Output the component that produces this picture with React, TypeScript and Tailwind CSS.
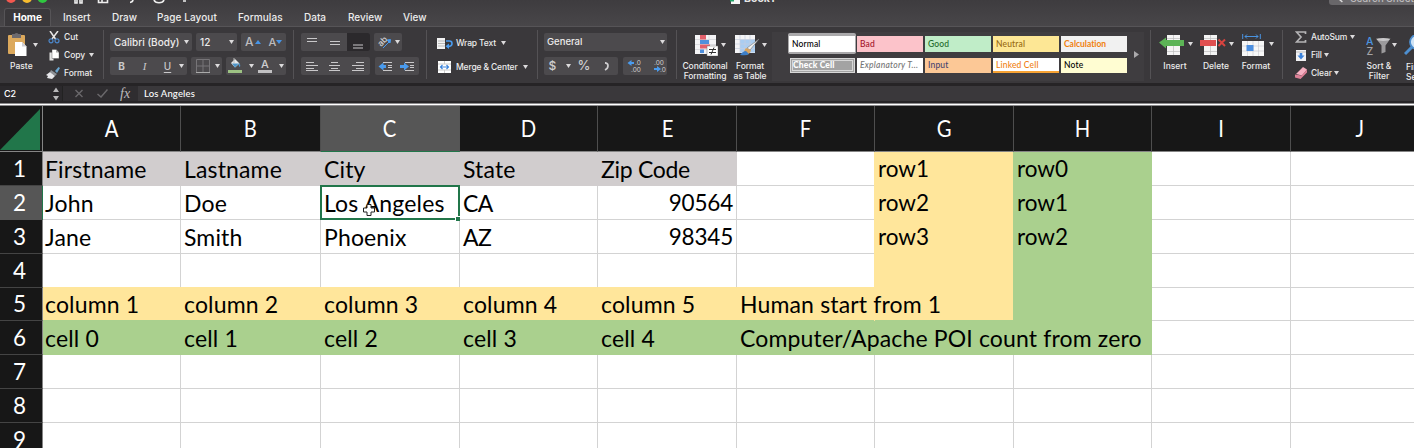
import React from "react";

const Caret = ({ className = "" }: { className?: string }) => (
  <svg className={`h-1 w-[5px] shrink-0 ${className}`} viewBox="0 0 5 4">
    <path d="M0 0h5L2.5 4z" fill="#dcdbdc" />
  </svg>
);

const Sep = ({ className = "" }: { className?: string }) => (
  <div className={`mt-[3px] h-[49px] w-px shrink-0 bg-[#545255] ${className}`} />
);

const Btn = ({ className = "", children }: { className?: string; children?: React.ReactNode }) => (
  <div className={`flex h-[18px] shrink-0 items-center rounded-[2px] bg-[#4c4a4d] ${className}`}>{children}</div>
);

const Lines = ({ rows, className = "" }: { rows: number[][]; className?: string }) => (
  <svg className={`h-[17px] w-[23px] shrink-0 ${className}`} viewBox="0 0 23 17">
    {rows.map(([x, y, w], i) => (
      <rect key={i} x={x} y={y} width={w} height="1" fill="#c9c8ca" />
    ))}
  </svg>
);

const tabs = [
  { label: "Home", cls: "w-[47px] ml-1 justify-center rounded-t-[3px] border border-b-0 border-[#565457] bg-[#3a383b] font-bold text-white" },
  { label: "Insert", cls: "ml-[12px] w-[49px]" },
  { label: "Draw", cls: "w-[45px]" },
  { label: "Page Layout", cls: "w-[81px] tracking-[0.08px]" },
  { label: "Formulas", cls: "w-[66px] tracking-[0.08px]" },
  { label: "Data", cls: "w-[44px]" },
  { label: "Review", cls: "w-[55px]" },
  { label: "View", cls: "w-[40px]" },
];

function TitleBar() {
  return (
    <div className="flex h-[8px] items-start overflow-hidden">
      <svg className="h-[8px] w-[200px] shrink-0" viewBox="0 0 200 8">
        <circle cx="11" cy="-2" r="5" fill="#f4584f" />
        <circle cx="27" cy="-2" r="5" fill="#f8bc2e" />
        <circle cx="42.5" cy="-2" r="5" fill="#2fc840" />
        <g fill="none" stroke="#eee" strokeWidth="1.6">
          <path d="M75 0v3h2V0M80 0v3h2V0M98.500 0v2.500h9V0M102 2V0M130 2.500q3-.5 3-3M154 0q1 2.800 5 2.800t5-2.800M183 1h3" />
        </g>
      </svg>
      <svg className="ml-[530px] h-[5px] w-[11px] shrink-0" viewBox="0 0 11 5">
        <path d="M1 0h9v4H1z" fill="#f5f5f5" /><path d="M0 0h4v1.500H0z" fill="#21a366" />
      </svg>
      <div className="-mt-[8px] ml-[3px] w-[60px] text-[10.500px] font-bold leading-[14px] text-[#e6e6e6]">Book1</div>
      <div className="ml-auto h-[5px] w-[85px] overflow-hidden rounded-bl-[3px] bg-[#69676a]">
        <div className="-mt-[9px] flex pl-[6px] text-[10px] leading-[14px] text-[#bdbbbd]">
          <svg className="mr-1 mt-1 h-2.500 w-3" viewBox="0 0 12 10"><path d="M3 3l5 4" stroke="#ddd" strokeWidth="1.500" /></svg>
          <span className="whitespace-nowrap">Search Sheet</span>
        </div>
      </div>
    </div>
  );
}

function Clipboard() {
  return (
    <div className="flex w-[103px] shrink-0">
      <div className="flex w-[46px] flex-col pl-2 pt-1.5">
        <div className="flex">
          <svg className="h-[23px] w-[19px]" viewBox="0 0 19 23">
            <rect x="0" y="2" width="17" height="19" rx="1" fill="#dca95c" />
            <path d="M4 1h2.500q2-2 4 0H13v4H4z" fill="#6d6a6e" />
            <path d="M7 9h7l4.500 4.500V23H7z" fill="#fff" /><path d="M14 9v4.500h4.500" fill="#cfcfd4" />
          </svg>
          <Caret className="ml-[6px] mt-[10px]" />
        </div>
        <div className="ml-[2px] mt-[3px] text-[8.500px] leading-[14px]">Paste</div>
      </div>
      <div className="flex flex-col pt-[1px] tracking-[-0.05px]">
        <div className="flex h-[18px] items-center">
          <svg className="ml-[2px] mr-[4px] h-[13px] w-[12px]" viewBox="1 0 12 13">
            <path d="M3 0l5.500 8M11 0L5 8" stroke="#e8e8e8" strokeWidth="1.500" />
            <g fill="none" stroke="#4c86c8" strokeWidth="1.200"><circle cx="4" cy="9.800" r="2" /><circle cx="10" cy="9.800" r="2" /></g>
          </svg>Cut
        </div>
        <div className="flex h-[18px] items-center">
          <svg className="mr-[4px] h-[12px] w-[14px]" viewBox="0 0 14 12">
            <path d="M3.500 3.500h4v8h-4z" fill="#e2e2e2" /><path d="M6 .5h4l3 3v6H6z" fill="#fff" stroke="#444" strokeWidth=".4" /><path d="M10 .5v3h3" fill="#aaa" />
          </svg>Copy<Caret className="ml-[4px]" />
        </div>
        <div className="flex h-[18px] items-center">
          <svg className="mr-[4px] h-[12px] w-[14px]" viewBox="0 0 14 12">
            <path d="M9 4l3.500-4L14 1l-3 5z" fill="#6ba6cf" /><path d="M5 3l6 4-2 2-5-4z" fill="#8e9297" /><path d="M4 5l5 4-3 3-5-1 1-2-2-1z" fill="#e7e7ea" />
          </svg>Format
        </div>
      </div>
    </div>
  );
}

function FontGroup() {
  return (
    <div className="flex w-[189px] shrink-0 flex-col gap-[6px] pl-[6px] pt-1.5">
      <div className="flex gap-1">
        <Btn className="w-[82px] justify-between pl-1 pr-[3px] text-[10px]"><span>Calibri (Body)</span><Caret /></Btn>
        <Btn className="w-[41px] justify-between pl-[4px] pr-[3px] text-[10px]"><span>12</span><Caret /></Btn>
        <Btn className="w-[45px] pl-1 text-[#bdbbbd]">
          <span className="text-[12px]">A</span>
          <svg className="mb-[1px] ml-px h-[4px] w-[6px]" viewBox="0 0 6 4"><path d="M0 4h6L3 0z" fill="#4795e8" /></svg>
          <span className="ml-[8px] text-[11px]">A</span>
          <svg className="h-[4px] w-[6px]" viewBox="0 0 6 4"><path d="M0 0h6L3 4z" fill="#4795e8" /></svg>
        </Btn>
      </div>
      <div className="flex gap-1">
        <Btn className="w-[77px] text-[10px] text-[#c9c8ca]">
          <span className="w-[23px] text-center font-bold">B</span>
          <span className="w-[23px] text-center font-['Liberation_Serif'] text-[11px] italic">I</span>
          <span className="w-[23px] text-center underline underline-offset-2">U</span>
          <Caret />
        </Btn>
        <Btn className="w-[31px] pl-[5px]">
          <svg className="h-[14px] w-[14px]" viewBox="0 0 14 14"><g fill="none" stroke="#777578"><path d="M.5 .5h13v13H.5zM7 0v14M0 7h14" /></g><path d="M0 13.500h14" stroke="#aaa" /></svg>
          <Caret className="ml-[5px]" />
        </Btn>
        <Btn className="w-[60px] pl-[2px]">
          <svg className="h-[16px] w-[14px]" viewBox="0 0 14 16">
            <path d="M3 5l4-4 4.500 4.500-4.500 4z" fill="#e9e9ea" /><path d="M4 5.500l7 0-4 4z" fill="#4e95c9" /><path d="M6 0v5" stroke="#bbb" /><path d="M11 5q2 2 1 4-2-1-1-4" fill="#4e95c9" />
            <rect y="12" width="14" height="3" fill="#9dc283" />
          </svg>
          <Caret className="ml-[7px]" />
          <div className="ml-[4px] flex w-[14px] flex-col items-center">
            <span className="text-[11px] leading-[11px] text-[#cfced0]">A</span>
            <span className="h-[3px] w-[14px] bg-[#c2c1c3]" />
          </div>
          <Caret className="ml-[7px]" />
        </Btn>
      </div>
    </div>
  );
}

const Indent = ({ flip }: { flip?: boolean }) => (
  <svg className="h-[17px] w-[22px]" viewBox="0 0 22 17">
    <path d={flip ? "M3 7h4V4.500L12 8.500l-5 4V10H3z" : "M11 7H8.500V4.500L3.500 8.500l5 4V10H11z"} fill="#4a9bee" />
    <path d="M8 4.500h9M13 7.500h4M13 9.500h4M8 12.500h9" stroke="#c9c8ca" />
  </svg>
);

function AlignGroup() {
  return (
    <div className="flex w-[132px] shrink-0 flex-col gap-[6px] pl-[7px] pt-1.5">
      <div className="flex gap-1">
        <Btn className="w-[69px] overflow-hidden">
          <Lines rows={[[6, 4, 10], [6, 7, 10]]} />
          <Lines rows={[[6, 7, 10], [6, 10, 10]]} />
          <Lines className="h-[18px] bg-[#2b292c]" rows={[[6, 11, 10], [6, 14, 10]]} />
        </Btn>
        <Btn className="w-[28px] pl-1">
          <svg className="h-[14px] w-[14px] overflow-visible" viewBox="0 0 14 14">
            <text x="0" y="9" fill="#d5d4d6" fontSize="8.500" fontFamily="Inter" transform="rotate(-45 5 7)">ab</text>
            <path d="M5 13l7-7M12.500 4.500l-3.500.5 3 3z" stroke="#4a9bee" fill="#4a9bee" />
          </svg>
          <Caret className="ml-[3px]" />
        </Btn>
      </div>
      <div className="flex gap-[5px]">
        <Btn className="w-[69px]">
          <Lines rows={[[5, 4, 8], [5, 7, 12], [5, 10, 8], [5, 12, 12]]} />
          <Lines rows={[[7, 4, 7], [5, 7, 11], [7, 10, 7], [5, 12, 11]]} />
          <Lines rows={[[9, 4, 8], [5, 7, 12], [9, 10, 8], [5, 12, 12]]} />
        </Btn>
        <Btn className="w-[44px]"><Indent /><Indent flip /></Btn>
      </div>
    </div>
  );
}

function WrapGroup() {
  return (
    <div className="flex w-[110px] shrink-0 flex-col pl-[10px] pt-[4px] tracking-[-0.15px]">
      <div className="flex h-6 items-center">
        <svg className="mr-[3px] h-[11px] w-[16px]" viewBox="0 0 16 11">
          <path d="M0 0h8v11H0z" fill="#f3f3f3" /><path d="M1 3h7M1 5.500h7M1 8h7" stroke="#aaa" strokeWidth=".8" />
          <path d="M9 3h3.500q2.500 0 2.500 2.500T12 8.500h-1" fill="none" stroke="#4a9bee" strokeWidth="1.600" /><path d="M12 5.500v5.500l-3.500-2.800z" fill="#4a9bee" />
        </svg>
        Wrap Text<Caret className="ml-[5px]" />
      </div>
      <div className="flex h-6 items-center">
        <svg className="ml-[1px] mr-[5px] h-[12px] w-[13px]" viewBox="0 0 13 12">
          <path d="M0 0h13v12H0z" fill="#fff" /><path d="M0 3h13M0 9h13M6.500 0v3M6.500 9v3" stroke="#ccc" />
          <path d="M3 6h7M4.500 4L2.500 6l2 2M8.500 4l2 2-2 2" stroke="#3d85dd" fill="none" strokeWidth="1.200" />
        </svg>
        Merge &amp; Center<Caret className="ml-[5px]" />
      </div>
    </div>
  );
}

function NumberGroup() {
  return (
    <div className="flex w-[138px] shrink-0 flex-col gap-[6px] pl-[6px] pt-1.5">
      <Btn className="w-[123px] justify-between pl-[3px] pr-[2px]"><span className="text-[9.500px]">General</span><Caret /></Btn>
      <div className="flex gap-[5px]">
        <Btn className="w-[74px] text-[#cfced0]">
          <span className="w-[17px] text-center text-[12px]">$</span><Caret className="ml-[5px]" />
          <span className="ml-[4px] w-[18px] text-center text-[13px]">%</span>
          <svg className="ml-[11px] h-[9px] w-[5px]" viewBox="0 0 5 9"><path d="M1 .8q3 .2 3 3T1 8" fill="none" stroke="#cfced0" strokeWidth="1.700" /></svg>
        </Btn>
        <Btn className="w-[44px] font-normal">
          <svg className="h-[18px] w-[44px]" viewBox="0 0 44 18" fontFamily="Inter" fontSize="6.500" fill="#d0cfd1">
            <path d="M4.500 6l4-3v2h2.500v2H8.500v2zM38 12l-4-3v2h-3v2h3v2z" fill="#4a9bee" />
            <text x="12" y="8">.0</text><text x="8" y="15">.00</text><text x="31" y="8">.00</text><text x="37" y="15">.0</text>
          </svg>
        </Btn>
      </div>
    </div>
  );
}

function FormatGroup() {
  return (
    <div className="flex w-[95px] shrink-0 pt-2 text-center leading-[9.500px]">
      <div className="flex w-[58px] flex-col items-center">
        <div className="flex pl-[9px]">
          <svg className="h-[21px] w-[23px]" viewBox="0 0 23 21">
            <path d="M0 0h21v19H0z" fill="#f4f4f6" /><path d="M7 0v19M14 0v19M0 4.500h21M0 9.500h21M0 14.500h21" stroke="#cfd0d6" strokeWidth=".7" />
            <path d="M5 0h6v4.500H5z" fill="#e2606b" /><path d="M5 5h9v4H5z" fill="#4f8fdc" /><path d="M5 9.500h10v4H5z" fill="#e2606b" /><path d="M5 14.500h4v3.500H5z" fill="#4f8fdc" />
            <path d="M12 11h11v10H12z" fill="#fff" stroke="#777" strokeWidth=".5" /><path d="M14 14.500h7M14 17.500h7M19 12.500l-3 7" stroke="#333" />
          </svg>
          <Caret className="ml-[3px] mt-2" />
        </div>
        <div className="-ml-[2px] mt-[6px] tracking-[-0.1px]">Conditional<br />Formatting</div>
      </div>
      <div className="flex w-[30px] flex-col items-center whitespace-nowrap">
        <div className="flex pl-[2px]">
          <svg className="h-[21px] w-[25px]" viewBox="0 0 25 21">
            <path d="M0 0h20v18H0z" fill="#f4f4f6" /><path d="M5 4.500h15v13H5z" fill="#aacdf1" /><path d="M5 0v18M10 0v18M15 0v18M0 4.500h20M0 9h20M0 13.500h20" stroke="#c5cfdf" strokeWidth=".7" />
            <path d="M24 4L15 15l-3-2z" fill="#f1f1f1" stroke="#777" strokeWidth=".6" /><path d="M11 13l5 2q-1 5-5 4t0-6" fill="#d9a45f" /><path d="M11 16q-3 0-6 4 7 1 9-1z" fill="#3c7fc9" />
          </svg>
          <Caret className="ml-[2px] mt-2" />
        </div>
        <div className="mt-[6px] tracking-[-0.1px]">Format<br />as Table</div>
      </div>
    </div>
  );
}

const styleRows = [
  [
    { t: "Bad", c: "bg-[#fcc3ca] text-[#a3142a]" },
    { t: "Good", c: "bg-[#c0edc8] text-[#1f6b2a]" },
    { t: "Neutral", c: "bg-[#fde795] text-[#97690f]" },
    { t: "Calculation", c: "bg-[#f1f1f1] font-bold! text-[#f0800f] tracking-[-0.02px]" },
  ],
  [
    { t: "Explanatory T...", c: "bg-white italic text-[#757575] tracking-[0.25px]" },
    { t: "Input", c: "bg-[#fcc896] text-[#484470]" },
    { t: "Linked Cell", c: "bg-linear-to-t from-[#f7a233] from-[2px] to-white to-[2px] text-[#f0800f]" },
    { t: "Note", c: "bg-[#fffdd2] text-black" },
  ],
];

function StyleGallery() {
  return (
    <div className="mt-[5px] flex h-[49px] w-[372px] shrink-0 bg-[#3f3d40] pl-4 font-['Lato'] text-[8.500px] font-medium tracking-[0.15px]">
      <div className="flex w-[340px] flex-col">
        <div className="flex items-center gap-[2px]">
          <div className="-mr-px mt-[1px] flex h-[21px] w-[68px] items-center rounded-[2px] border border-t-[3px] border-b-2 border-[#aaa9ab] bg-white pl-[3px] text-black">Normal</div>
          {styleRows[0].map((s) => (
            <div key={s.t} className={`mt-[2px] flex h-4 w-[66px] items-center whitespace-nowrap pl-[3px] ${s.c}`}>{s.t}</div>
          ))}
        </div>
        <div className="mt-[4px] flex gap-[2px]">
          <div className="flex h-[15px] w-[67px] pl-[2px]">
            <div className="flex flex-1 items-center border-[3px] border-double border-[#d8d8d8] bg-[#a3a3a3] font-black text-white">Check Cell</div>
          </div>
          {styleRows[1].map((s) => (
            <div key={s.t} className={`flex h-[15px] w-[66px] items-center whitespace-nowrap pl-[3px] ${s.c}`}>{s.t}</div>
          ))}
        </div>
      </div>
      <svg className="ml-[6px] mt-[19px] h-[7px] w-[5px]" viewBox="0 0 5 7"><path d="M0 0l5 3.500L0 7z" fill="#aaa9ab" /></svg>
    </div>
  );
}

function CellsGroup() {
  return (
    <div className="flex w-[131px] shrink-0 pl-1 pt-[7px] text-center">
      <div className="flex w-10 flex-col items-center">
        <div className="flex pl-[2px]">
          <svg className="h-[22px] w-[26px]" viewBox="0 0 26 22">
            <path d="M8 1h13v20H8z" fill="#f4f4f4" /><path d="M14.500 1v20M8 4.500h13M8 17.500h13" stroke="#bbb" strokeWidth=".7" />
            <path d="M0 8.500L7 3.500v2.500h18v6H7v2.500z" fill="#5cb456" />
          </svg>
          <Caret className="ml-[3px] mt-2" />
        </div>
        <div className="mt-[4px]">Insert</div>
      </div>
      <div className="flex w-[42px] flex-col items-center">
        <div className="flex pl-[2px]">
          <svg className="h-[22px] w-[26px]" viewBox="0 0 26 22">
            <path d="M4 1h13v20H4z" fill="#f4f4f4" /><path d="M10.500 1v20M4 4.500h13M4 17.500h13" stroke="#bbb" strokeWidth=".7" />
            <path d="M0 6h16v6H0z" fill="#e04f50" /><path d="M18.500 5.500l6.500 6.500M25 5.500L18.500 12" stroke="#d8433f" strokeWidth="2" />
          </svg>
          <Caret className="ml-[3px] mt-2" />
        </div>
        <div className="mt-[4px]">Delete</div>
      </div>
      <div className="flex w-[38px] flex-col items-center">
        <div className="flex pl-[4px]">
          <svg className="h-[22px] w-[23px]" viewBox="0 0 23 22">
            <path d="M.7 0v5M18.300 0v5M3 2.500h13M5 .5l-2 2 2 2M14 .5l2 2-2 2" stroke="#4a93e0" fill="none" />
            <path d="M0 7h22v15H0z" fill="#f7f7f7" /><path d="M5.500 7v15M11 7v15M16.500 7v15M0 12h22M0 17h22" stroke="#c8c8cc" strokeWidth=".6" /><path d="M4.500 11h7v6h-7z" fill="#4c8fe0" />
          </svg>
          <Caret className="ml-[4px] mt-2" />
        </div>
        <div className="mt-[4px]">Format</div>
      </div>
    </div>
  );
}

function EditGroup() {
  return (
    <div className="flex shrink-0 pl-[12px]">
      <div className="flex w-[66px] flex-col pt-[1px] tracking-[-0.15px]">
        <div className="flex h-[18px] items-center">
          <svg className="mr-[4px] h-[12px] w-[12px]" viewBox="0 0 12 12"><path d="M10.500 3V1H1.500L6 6l-4.500 5h9V9" fill="none" stroke="#b5b4b6" strokeWidth="1.700" /></svg>
          AutoSum<Caret className="ml-[3px]" />
        </div>
        <div className="flex h-[18px] items-center">
          <svg className="mr-[5px] ml-px h-[11px] w-[10px]" viewBox="0 0 10 11"><path d="M0 0h10v11H0z" fill="#f2f2f4" /><path d="M0 2h10" stroke="#bbb" /><path d="M3.700 3h2.600v2.500H8.500L5 9.500 1.500 5.500h2.200z" fill="#3c83dc" /></svg>
          Fill<Caret className="ml-[2px]" />
        </div>
        <div className="flex h-[18px] items-center">
          <svg className="mr-[4px] h-[12px] w-[12px]" viewBox="0 0 12 12"><path d="M8 0l4 2.500-5 6-6-1.500z" fill="#f6b0c1" /><path d="M0 7.500l6.500 1L5.500 12 0 10.500zM12 2.500v3L5.500 12l1-3.500z" fill="#dc8096" /></svg>
          Clear<Caret className="ml-[2px]" />
        </div>
      </div>
      <div className="flex w-[38px] flex-col items-center whitespace-nowrap pt-[9px] text-center leading-[9.500px]">
        <div className="flex pl-[2px]">
          <svg className="h-[20px] w-[25px]" viewBox="0 0 25 20" fontFamily="Inter" fontSize="10.500">
            <text x="0" y="8.500" fill="#4a93e0">A</text><text x="0.500" y="18.500" fill="#a5a4a6">Z</text>
            <path d="M10 2.500h14.500l-5 7V16l-4 1.500v-8z" fill="#9b9a9c" /><ellipse cx="17.200" cy="3.500" rx="6.500" ry="1.500" fill="#c9c8ca" />
          </svg>
          <Caret className="ml-[1px] mt-[7px]" />
        </div>
        <div className="-ml-[2px] mt-[6px]">Sort &amp;<br />Filter</div>
      </div>
      <div className="flex w-[30px] flex-col whitespace-nowrap pl-[5px] pt-2 leading-[9.500px]">
        <svg className="h-[21px] w-[22px]" viewBox="0 0 22 21"><circle cx="13" cy="7" r="7" fill="#cfe3f5" stroke="#4d8fd0" strokeWidth="1.800" /><path d="M8 12l-7 7" stroke="#4d8fd0" strokeWidth="3" /></svg>
        <div className="ml-[2px] mt-[7px]">Find &amp;<br />Select</div>
      </div>
    </div>
  );
}

function FormulaBar() {
  return (
    <div className="flex h-[20px] shrink-0 items-center border-y-[3px] border-b-2 border-[#262426] bg-[#3a383b] text-[9px] text-white">
      <div className="flex h-full w-[63px] items-center justify-between border-r border-[#222] bg-[#2b292c] pl-1 pr-[3px]">
        <span className="tracking-[-0.2px]">C2</span>
        <svg className="h-[14px] w-[6px]" viewBox="0 0 6 14"><path d="M0 5l3-4.500L6 5zM0 9h6l-3 4.500z" fill="#b9b8ba" /></svg>
      </div>
      <div className="flex h-full w-[75px] items-center bg-[#2f2d30] pl-3">
        <svg className="h-[9px] w-[8px]" viewBox="0 0 8 9"><path d="M.5 1l7 7M7.500 1l-7 7" stroke="#6a686b" strokeWidth="1.400" /></svg>
        <svg className="ml-[14px] h-[9px] w-[11px]" viewBox="0 0 11 9"><path d="M.5 5l3.500 3L10.500.5" fill="none" stroke="#6a686b" strokeWidth="1.500" /></svg>
        <span className="ml-[12px] font-['Liberation_Serif'] text-[14px] italic leading-none text-[#bdbbbd]">fx</span>
      </div>
      <span className="pl-[6px] pt-px font-['Lato'] text-[9.500px] font-medium tracking-[0.15px]">Los Angeles</span>
    </div>
  );
}

const gridCols = "grid grid-cols-[43px_138px_140px_139px_138px_139px_138px_139px_138px_139px_138px]";
const Y = "bg-[#ffe69b] shadow-[-1px_-1px_0_#ffe69b]";
const G = "bg-[#aad08e] shadow-[-1px_-1px_0_#aad08e]";
const S = "bg-[#d1cdce] shadow-[-1px_-1px_0_#d1cdce]";
const plain = "border-r border-b border-[#d3d3d3]";
const numeric = "justify-end pr-[3px] text-[22.500px] tracking-[-0.2px]";
const label = "text-[22.500px] tracking-normal";

type Cell = { t?: string; f?: string; cls?: string };
const sheet: Cell[][] = [
  [{ t: "Firstname", f: S }, { t: "Lastname", f: S }, { t: "City", f: S }, { t: "State", f: S }, { t: "Zip Code", f: S, cls: "tracking-[-0.3px]" }, {}, { t: "row1", f: Y, cls: label }, { t: "row0", f: G, cls: label }, {}, {}],
  [{ t: "John" }, { t: "Doe" }, { t: "Los Angeles" }, { t: "CA", cls: "tracking-[-0.5px]" }, { t: "90564", cls: numeric }, {}, { t: "row2", f: Y, cls: label }, { t: "row1", f: G, cls: label }, {}, {}],
  [{ t: "Jane" }, { t: "Smith" }, { t: "Phoenix" }, { t: "AZ", cls: "tracking-[-0.5px]" }, { t: "98345", cls: numeric }, {}, { t: "row3", f: Y, cls: label }, { t: "row2", f: G, cls: label }, {}, {}],
  [{}, {}, {}, {}, {}, {}, { f: Y }, { f: G }, {}, {}],
  [{ t: "column 1", f: Y }, { t: "column 2", f: Y }, { t: "column 3", f: Y }, { t: "column 4", f: Y }, { t: "column 5", f: Y }, { t: "Human start from 1", f: Y, cls: "z-10" }, { f: Y }, { f: G }, {}, {}],
  [{ t: "cell 0", f: G }, { t: "cell 1", f: G }, { t: "cell 2", f: G }, { t: "cell 3", f: G }, { t: "cell 4", f: G }, { t: "Computer/Apache POI count from zero", f: G, cls: "z-10" }, { f: G }, { f: G }, {}, {}],
  [{}, {}, {}, {}, {}, {}, {}, {}, {}, {}],
  [{}, {}, {}, {}, {}, {}, {}, {}, {}, {}],
  [{}, {}, {}, {}, {}, {}, {}, {}, {}, {}],
];

function Sheet() {
  return (
    <div className="w-[1429px] font-['Lato'] text-[23px] font-normal leading-[28px] tracking-[0.15px]">
      <div className={`${gridCols} relative z-20 h-[46px] text-[22.500px] tracking-normal text-white`}>
        <div className="flex items-end justify-end border-b border-r border-[#858585] bg-[#171717] pb-[1px] pr-[2px]">
          <svg className="h-[41px] w-10" viewBox="0 0 40 41"><path d="M40 0v41H0z" fill="#21764a" /></svg>
        </div>
        {"ABCDEFGHIJ".split("").map((c) => (
          <div key={c} className={`flex items-center justify-center border-b border-r ${c === "C" ? "border-r-[#555] border-b-[#21764a] bg-[#565656]" : "border-r-[#4e4e4e] border-b-[#858585] bg-[#171717]"}`}>
            <span className="scale-x-90">{c}</span>
          </div>
        ))}
      </div>
      {sheet.map((row, r) => (
        <div key={r} className={`${gridCols} ${r === 4 ? "h-[33px]" : "h-[34px]"}`}>
          <div className={`relative z-20 flex items-center justify-center border-b border-r pr-[3px] text-[22.500px] tracking-normal text-white ${r === 1 ? "border-b-[#565656] border-r-[#21764a] bg-[#565656]" : "border-b-[#444] border-r-[#858585] bg-[#171717]"}`}>{r + 1}</div>
          {row.map((cell, c) => (
            <div key={c} className={`relative flex items-center whitespace-nowrap text-black ${c === 0 ? "pl-[2px]" : "pl-[3px]"} ${cell.f ?? "bg-white"} ${cell.f ? "border-b border-r border-transparent" : plain} ${cell.cls ?? ""}`}>
              {cell.t}
              {r === 1 && c === 2 && (
                <>
                  <div className="absolute -left-px -top-px h-[35px] w-[140px] border-2 border-[#21764a]" />
                  <div className="absolute -bottom-[2px] -right-[1px] z-20 h-[5px] w-[5px] border-l border-t border-white bg-[#21764a]" />
                  <svg className="absolute left-[42px] top-[18px] h-[12px] w-[12px]" viewBox="0 0 12 12">
                    <path d="M4 .5h4V4h3.500v4H8v3.500H4V8H.5V4H4z" fill="#fff" stroke="#222" />
                  </svg>
                </>
              )}
            </div>
          ))}
        </div>
      ))}
    </div>
  );
}

export default function App() {
  return (
    <div className="flex h-[448px] w-[1414px] flex-col overflow-hidden bg-white font-['Inter'] text-[8.500px] font-medium text-[#ececec]">
      <div className="flex h-[27px] shrink-0 flex-col border-b border-[#565457] bg-linear-to-b from-[#3e3c3f] to-[#484649]">
        <TitleBar />
        <div className="flex h-[18px] text-[10px]">
          {tabs.map((t) => (
            <div key={t.label} className={`flex shrink-0 items-center whitespace-nowrap ${t.cls}`}>{t.label}</div>
          ))}
        </div>
      </div>
      <div className="flex h-14 w-[1440px] shrink-0 bg-[#3a383b]">
        <Clipboard />
        <Sep />
        <FontGroup />
        <Sep />
        <AlignGroup />
        <Sep />
        <WrapGroup />
        <Sep />
        <NumberGroup />
        <Sep />
        <FormatGroup />
        <StyleGallery />
        <Sep className="ml-[6px]" />
        <CellsGroup />
        <Sep />
        <EditGroup />
      </div>
      <FormulaBar />
      <div className="h-[3px] shrink-0 border-y border-[#8b8a8c] bg-white" />
      <Sheet />
    </div>
  );
}
